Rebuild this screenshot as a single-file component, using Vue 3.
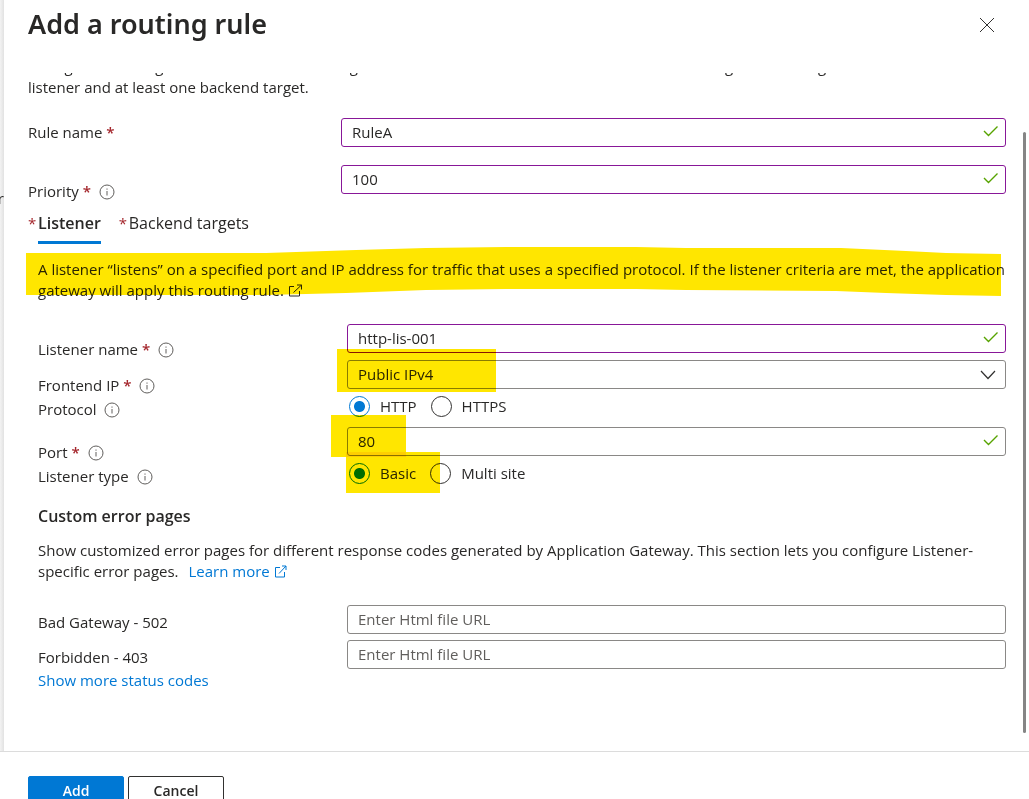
<script setup>
import { ref } from 'vue'

const ruleName = ref('RuleA')
const priority = ref('100')
const listenerName = ref('http-lis-001')
const frontendIp = ref('Public IPv4')
const protocol = ref('HTTP')
const port = ref('80')
const listenerType = ref('Basic')
const errorPages = ref([
  { id: 'bad-gateway', label: 'Bad Gateway - 502', url: '' },
  { id: 'forbidden', label: 'Forbidden - 403', url: '' }
])
</script>

<template>
  <div class="shell">
    <div class="middle">
      <div class="behind"><span>r</span></div>
      <section class="panel">
        <header class="head">
          <h1>Add a routing rule</h1>
          <button class="close" type="button" aria-label="Close">
            <svg width="16" height="16" viewBox="0 0 16 16"><path d="M1 1L15 15M15 1L1 15" /></svg>
          </button>
        </header>

        <main class="scroller">
          <p class="intro">
            Configure a routing rule to send traffic from a given frontend IP address to one or more backend targets. A
            routing rule must contain a listener and at least one backend target.
          </p>

          <div class="rule-fields">
            <div class="row rule">
              <label for="rule-name">Rule name <b class="req">*</b></label>
              <div class="box edited">
                <input id="rule-name" v-model="ruleName" type="text" />
                <svg class="tick" width="16" height="12" viewBox="0 0 16 12"><path d="M1 6L5.500 10.500L14.500 1.500" /></svg>
              </div>
            </div>
            <div class="row rule low">
              <label for="priority">Priority <b class="req">*</b>
                <svg class="info" width="16" height="16" viewBox="0 0 16 16"><circle cx="8" cy="8" r="7" /><path d="M8 7V11.500M8 4.500V5.700" /></svg>
              </label>
              <div class="box edited">
                <input id="priority" v-model="priority" type="text" />
                <svg class="tick" width="16" height="12" viewBox="0 0 16 12"><path d="M1 6L5.500 10.500L14.500 1.500" /></svg>
              </div>
            </div>
          </div>

          <div class="tabs" role="tablist">
            <button type="button" role="tab" aria-selected="true" class="tab active"><i>*</i><span>Listener</span></button>
            <button type="button" role="tab" aria-selected="false" class="tab"><i>*</i><span>Backend targets</span></button>
          </div>

          <div class="tab-body">
            <p class="note">
              A listener “listens” on a specified port and IP address for traffic that uses a specified protocol. If the
              listener criteria are met, the application gateway will apply this routing rule.
              <svg class="ext" width="15" height="13" viewBox="0 0 15 13"><path d="M6 2.500H1.500V12H11.500V7M5.500 8.500L13.500 1M9 1H13.500V5.500" /></svg>
              <svg class="marker" viewBox="0 0 975 50" preserveAspectRatio="none">
                <path d="M0 6L240 6L330 3L400 1L480 0L610 0L660 1L815 1L880 4L920 6L975 7V49L920 48L860 46L810 44L660 43L610 42L480 42L400 43L320 46L240 48L0 48Z" />
              </svg>
            </p>

            <div class="row field">
              <label for="listener-name">Listener name <b class="req">*</b>
                <svg class="info" width="16" height="16" viewBox="0 0 16 16"><circle cx="8" cy="8" r="7" /><path d="M8 7V11.500M8 4.500V5.700" /></svg>
              </label>
              <div class="box edited">
                <input id="listener-name" v-model="listenerName" type="text" />
                <svg class="tick" width="16" height="12" viewBox="0 0 16 12"><path d="M1 6L5.500 10.500L14.500 1.500" /></svg>
              </div>
            </div>

            <div class="row field">
              <label for="frontend-ip">Frontend IP <b class="req">*</b>
                <svg class="info" width="16" height="16" viewBox="0 0 16 16"><circle cx="8" cy="8" r="7" /><path d="M8 7V11.500M8 4.500V5.700" /></svg>
              </label>
              <div class="box">
                <select id="frontend-ip" v-model="frontendIp">
                  <option>Public IPv4</option>
                </select>
                <svg class="chevron" width="16" height="10" viewBox="0 0 16 10"><path d="M1 1L8 8.500L15 1" /></svg>
                <span class="mark mark-ip"></span>
              </div>
            </div>

            <div class="row choice">
              <span id="protocol-label" class="label">Protocol
                <svg class="info" width="16" height="16" viewBox="0 0 16 16"><circle cx="8" cy="8" r="7" /><path d="M8 7V11.500M8 4.500V5.700" /></svg>
              </span>
              <div class="radios" role="radiogroup" aria-labelledby="protocol-label">
                <label><input v-model="protocol" type="radio" name="protocol" value="HTTP" />HTTP</label>
                <label><input v-model="protocol" type="radio" name="protocol" value="HTTPS" />HTTPS</label>
              </div>
            </div>

            <div class="row field port">
              <label for="port">Port <b class="req">*</b>
                <svg class="info" width="16" height="16" viewBox="0 0 16 16"><circle cx="8" cy="8" r="7" /><path d="M8 7V11.500M8 4.500V5.700" /></svg>
              </label>
              <div class="box">
                <input id="port" v-model="port" type="text" />
                <svg class="tick" width="16" height="12" viewBox="0 0 16 12"><path d="M1 6L5.500 10.500L14.500 1.500" /></svg>
                <span class="mark mark-port"></span>
              </div>
            </div>

            <div class="row choice">
              <span id="type-label" class="label">Listener type
                <svg class="info" width="16" height="16" viewBox="0 0 16 16"><circle cx="8" cy="8" r="7" /><path d="M8 7V11.500M8 4.500V5.700" /></svg>
              </span>
              <div class="radios" role="radiogroup" aria-labelledby="type-label">
                <label><input v-model="listenerType" type="radio" name="type" value="Basic" />Basic</label>
                <label><input v-model="listenerType" type="radio" name="type" value="Multi site" />Multi site</label>
                <span class="mark mark-type"></span>
              </div>
            </div>

            <h2>Custom error pages</h2>
            <p class="about">
              Show customized error pages for different response codes generated by Application Gateway. This section
              lets you configure Listener-specific error pages.
              <a class="learn" href="#">Learn more
                <svg class="ext" width="13" height="13" viewBox="0 0 13 13"><path d="M6 2.500H1.500V12H10.500V7M5 8.500L12 1M8 1H12V5" /></svg></a>
            </p>

            <div class="errors">
              <div v-for="page in errorPages" :key="page.id" class="row error">
                <label :for="page.id">{{ page.label }}</label>
                <div class="box">
                  <input :id="page.id" v-model="page.url" type="text" placeholder="Enter Html file URL" />
                </div>
              </div>
            </div>
            <a class="more" href="#">Show more status codes</a>
          </div>
        </main>
        <div class="thumb"></div>
      </section>
    </div>

    <footer class="foot">
      <button class="btn primary" type="button">Add</button>
      <button class="btn" type="button">Cancel</button>
    </footer>
  </div>
</template>

<style>
body {
  margin: 0;
  background: #fff;
}
</style>

<style scoped>
.shell {
  display: flex;
  flex-direction: column;
  height: 100vh;
  overflow: hidden;
  background: #fff;
  color: #292827;
  font: 15px/21px "Open Sans", "Noto Sans", sans-serif;
}
.shell * {
  box-sizing: border-box;
}
button,
input,
select {
  font: inherit;
  color: inherit;
}
h1,
h2,
p {
  margin: 0;
}
svg {
  fill: none;
}
a {
  color: #0078d4;
  text-decoration: none;
}
.middle {
  display: flex;
  flex: 1;
  min-height: 0;
}
.behind {
  flex: none;
  width: 4px;
  padding-top: 188px;
  overflow: hidden;
  background: linear-gradient(90deg, #f3f3f3, #e2e2e2);
  direction: rtl;
}
.panel {
  position: relative;
  display: flex;
  flex: 1;
  flex-direction: column;
  min-width: 0;
}
.head {
  display: flex;
  flex: none;
  justify-content: space-between;
  align-items: flex-start;
  height: 73px;
  padding: 8px 32px 0 24px;
}
h1 {
  font-family: "Noto Sans", "Open Sans", sans-serif;
  font-size: 27px;
  line-height: 32px;
  font-weight: 600;
}
.close {
  display: flex;
  padding: 9px 2px;
  border: 0;
  background: none;
}
.close svg {
  stroke: #323130;
}
.scroller {
  flex: 1;
  min-height: 0;
  padding: 0 23px 0 24px;
  overflow: hidden;
}
.intro {
  margin-top: -17px;
}
.row {
  display: grid;
  grid-template-columns: 309px minmax(0, 1fr);
}
.row.rule {
  grid-template-columns: 313px minmax(0, 1fr);
}
.rule-fields {
  display: grid;
  gap: 18px;
  padding-top: 20px;
}
.rule > label {
  padding-top: 4px;
}
.rule.low > label {
  padding-top: 16px;
}
.req,
.tab i {
  color: #a4262c;
  font-style: normal;
  font-weight: 600;
}
.info {
  margin-left: 8px;
  vertical-align: -3px;
  stroke: #605e5c;
}
.label .info {
  margin-left: 4px;
}
.box {
  position: relative;
  height: 29px;
}
.box input,
.box select {
  display: block;
  width: 100%;
  height: 100%;
  padding: 0 40px 2px 10px;
  border: 1px solid #8a8886;
  border-radius: 3px;
  outline: none;
  background: #fff;
  appearance: none;
}
.box select {
  padding-bottom: 0;
}
.box.edited input {
  border-color: #881798;
}
.box input::placeholder {
  color: #605e5c;
  opacity: 1;
}
.tick {
  position: absolute;
  top: 7px;
  right: 7px;
  stroke: #57a300;
  stroke-width: 1.4;
}
.chevron {
  position: absolute;
  top: 10px;
  right: 10px;
  stroke: #323130;
  stroke-width: 1.2;
}
.tabs {
  display: flex;
  gap: 18px;
  padding-top: 9px;
}
.tab {
  display: flex;
  padding: 0;
  border: 0;
  background: none;
  font-size: 16px;
  line-height: 24px;
  text-align: left;
}
.tab i {
  width: 10px;
  font-size: 15px;
  font-weight: 400;
}
.tab span {
  padding-bottom: 6px;
  border-bottom: 3px solid transparent;
}
.tab.active span {
  border-bottom-color: #0078d4;
  font-weight: 600;
}
.tab-body {
  padding: 15px 0 0 10px;
}
.note {
  position: relative;
  margin-bottom: 23px;
}
.marker {
  position: absolute;
  top: -12px;
  left: -12px;
  width: calc(100% + 7px);
  height: 50px;
  mix-blend-mode: multiply;
  pointer-events: none;
  fill: #ffe600;
}
.mark {
  position: absolute;
  background: #ffe600;
  mix-blend-mode: multiply;
  pointer-events: none;
}
.mark-ip {
  top: -11px;
  left: -10px;
  width: 159px;
  height: 43px;
}
.mark-port {
  top: -12px;
  left: -16px;
  width: 75px;
  height: 42px;
}
.mark-type {
  top: -11px;
  left: -1px;
  width: 94px;
  height: 41px;
}
.ext {
  stroke: #292827;
  vertical-align: -1px;
}
.row.field {
  height: 36px;
}
.row.field > label {
  align-self: end;
}
.row.choice {
  height: 24px;
}
.row.choice > .label {
  align-self: end;
}
.row.port {
  margin-top: 7px;
}
.radios {
  position: relative;
  display: flex;
  gap: 14px;
  height: 21px;
  padding-left: 2px;
}
.radios label {
  display: flex;
  align-items: center;
  gap: 10px;
}
.radios input {
  width: 21px;
  height: 21px;
  margin: 0;
  border: 1px solid #323130;
  border-radius: 50%;
  background: #fff;
  appearance: none;
}
.radios input:checked {
  border-color: #0078d4;
  background: radial-gradient(circle, #0078d4 5px, #fff 6px);
}
h2 {
  margin: 19px 0 13px;
  font-size: 16px;
  line-height: 21px;
  font-weight: 600;
}
.learn {
  margin-left: 6px;
}
.learn .ext {
  stroke: #0078d4;
}
.errors {
  display: grid;
  gap: 6px;
  margin-top: 23px;
}
.row.error > label {
  padding-top: 7px;
}
.more {
  display: inline-block;
  margin-top: 1px;
}
.thumb {
  position: absolute;
  top: 132px;
  right: 3px;
  bottom: 18px;
  width: 3px;
  border-radius: 2px;
  background: #858585;
}
.foot {
  display: flex;
  flex: none;
  gap: 4px;
  height: 48px;
  padding: 24px 28px 0;
  border-top: 1px solid #dcdcdc;
}
.btn {
  flex: none;
  width: 96px;
  height: 29px;
  padding: 0;
  border: 1px solid #323130;
  border-radius: 2px;
  background: #fff;
  font-size: 14px;
  font-weight: 600;
}
.btn.primary {
  border-color: #0078d4;
  background: #0078d4;
  color: #fff;
}
</style>
